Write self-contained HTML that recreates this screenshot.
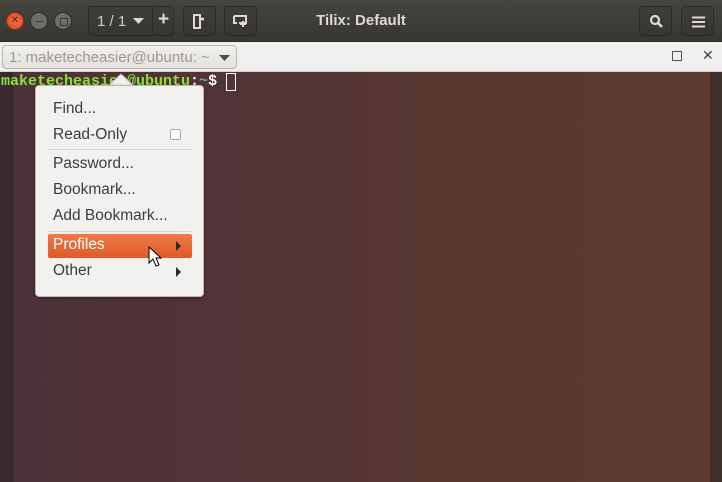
<!DOCTYPE html>
<html><head><meta charset="utf-8"><style>
*{margin:0;padding:0;box-sizing:border-box}
body{width:722px;height:482px;overflow:hidden;font-family:"Liberation Sans",sans-serif;position:relative;background:#4e3237}
.hdr{position:absolute;left:0;top:0;width:722px;height:42px;background:linear-gradient(#45443f,#373632);border-bottom:1px solid #2a2926}
.tb{position:absolute;top:6px;height:30px;border:1px solid #2b2a27;border-radius:4px;background:linear-gradient(#3f3e3a,#363531);color:#dfdbd2}
.tabbar{position:absolute;left:0;top:42px;width:722px;height:30px;background:#f0efed;border-bottom:1px solid #d8d4cf}
.term{position:absolute;left:0;top:72px;width:722px;height:410px;background:linear-gradient(90deg,#4b3238 0%,#523338 30%,#573630 60%,#5d3b31 100%)}
.menu{position:absolute;left:35px;top:85px;width:169px;height:212px;background:#f2f1f0;border:1px solid #bcb8b3;border-radius:4px;box-shadow:0 1px 3px rgba(0,0,0,.4)}
.mi{position:absolute;left:17px;font-size:15.5px;color:#3c3c3c}
.sep{position:absolute;left:12px;width:143px;height:1px;background:#dad7d3}
</style></head><body>
<div class="hdr">
 <div style="position:absolute;left:6px;top:12px;width:18px;height:18px;border-radius:50%;background:radial-gradient(#f3704a,#d9481c);border:1px solid #8a2d12;color:#5b1b08;font-size:10px;line-height:16px;text-align:center">✕</div>
 <div style="position:absolute;left:30px;top:12px;width:18px;height:18px;border-radius:50%;background:#6f6d67;border:1px solid #2e2d2a"><div style="position:absolute;left:5px;top:7.5px;width:7px;height:1.5px;background:#3a3935"></div></div>
 <div style="position:absolute;left:54px;top:12px;width:18px;height:18px;border-radius:50%;background:#6f6d67;border:1px solid #2e2d2a"><div style="position:absolute;left:4.5px;top:4.5px;width:8px;height:8px;border:1.5px solid #3a3935"></div></div>
 <div class="tb" style="left:88px;width:86px">
  <span style="position:absolute;left:8px;top:6px;font-size:15px;color:#d0ccc4">1 / 1</span>
  <svg style="position:absolute;left:44px;top:11px" width="11" height="7"><path d="M0 0h11L5.5 6z" fill="#dfdbd2"/></svg>
  <div style="position:absolute;left:63px;top:0;width:1px;height:28px;background:#2b2a27"></div>
  <span style="position:absolute;left:69px;top:2px;font-size:19px;font-weight:bold">+</span>
 </div>
 <div class="tb" style="left:183px;width:33px"><svg style="position:absolute;left:9px;top:7px" width="14" height="15"><path d="M1 1h6v13H1zM8 5h3M9.5 3.5v3" stroke="#dfdbd2" stroke-width="2" fill="none"/></svg></div>
 <div class="tb" style="left:224px;width:33px"><svg style="position:absolute;left:8px;top:8px" width="17" height="13"><path d="M1 1h12v7H6M1 1v7h3M10 6v6M7 9h6" stroke="#dfdbd2" stroke-width="2" fill="none"/></svg></div>
 <div style="position:absolute;left:0;width:722px;top:12px;text-align:center;font-size:15px;font-weight:bold;color:#dfdbd2">Tilix: Default</div>
 <div class="tb" style="left:639px;width:33px"><svg style="position:absolute;left:9px;top:7px" width="15" height="15"><circle cx="6" cy="6" r="4" stroke="#dfdbd2" stroke-width="2.2" fill="none"/><path d="M9 9l4 4" stroke="#dfdbd2" stroke-width="2.6"/></svg></div>
 <div class="tb" style="left:681px;width:33px"><svg style="position:absolute;left:10px;top:9px" width="13" height="12"><path d="M0 1.5h13M0 6h13M0 10.5h13" stroke="#dfdbd2" stroke-width="2"/></svg></div>
</div>
<div class="tabbar">
 <div style="position:absolute;left:2px;top:3px;width:235px;height:24px;border:1px solid #b9b5b0;border-radius:4px;background:linear-gradient(#f1f0ee,#e4e1de)">
  <span style="position:absolute;left:6px;top:3px;font-size:15px;color:#9c9892">1: maketecheasier@ubuntu: ~</span>
  <svg style="position:absolute;left:216px;top:9px" width="11" height="7"><path d="M0 0h11L5.5 6z" fill="#4c4c4c"/></svg>
 </div>
 <div style="position:absolute;left:672px;top:9px;width:10px;height:10px;border:1px solid #555"></div>
 <span style="position:absolute;left:702px;top:5px;font-size:14px;color:#444">✕</span>
</div>
<div class="term">
 <div style="position:absolute;left:0;top:0;width:13px;height:410px;background:linear-gradient(90deg,#3d2c2f,#36292c)"></div>
 <div style="position:absolute;left:710px;top:0;width:12px;height:410px;background:#3e2e2c"></div>
 <div style="position:absolute;left:1px;top:1px;font-family:'Liberation Mono',monospace;font-size:15px;font-weight:bold;white-space:pre;color:#8ae234">maketecheasier@ubuntu<span style="color:#fff">:</span><span style="color:#729fcf">~</span><span style="color:#fff">$ </span></div>
 <div style="position:absolute;left:226px;top:1px;width:10px;height:18px;border:1.5px solid #fff"></div>
</div>
<svg style="position:absolute;left:108px;top:73px" width="26" height="14"><path d="M0 13L13 1L26 13" fill="#f2f1f0" stroke="#bcb8b3"/></svg>
<div class="menu">
 <div class="mi" style="top:14px">Find...</div>
 <div class="mi" style="top:40px">Read-Only</div>
 <div style="position:absolute;left:134px;top:43px;width:11px;height:11px;border:1px solid #a9a6a2;border-radius:2px;background:#fff"></div>
 <div class="sep" style="top:63px"></div>
 <div class="mi" style="top:69px">Password...</div>
 <div class="mi" style="top:95px">Bookmark...</div>
 <div class="mi" style="top:121px">Add Bookmark...</div>
 <div class="sep" style="top:145px"></div>
 <div style="position:absolute;left:12px;top:148px;width:144px;height:24px;border-radius:2px;background:linear-gradient(#ee7a48,#e05a28)"></div>
 <div class="mi" style="top:150px;color:#fff">Profiles</div>
 <svg style="position:absolute;left:140px;top:155px" width="6" height="10"><path d="M0 0l5 5-5 5z" fill="#2a2a2a"/></svg>
 <div class="mi" style="top:176px">Other</div>
 <svg style="position:absolute;left:140px;top:181px" width="6" height="10"><path d="M0 0l5 5-5 5z" fill="#2a2a2a"/></svg>
</div>
<svg style="position:absolute;left:148px;top:246px" width="14" height="22"><path d="M1 1v16l4-4 3 7 3-1-3-7h5z" fill="#fff" stroke="#000" stroke-width="1"/></svg>
</body></html>
